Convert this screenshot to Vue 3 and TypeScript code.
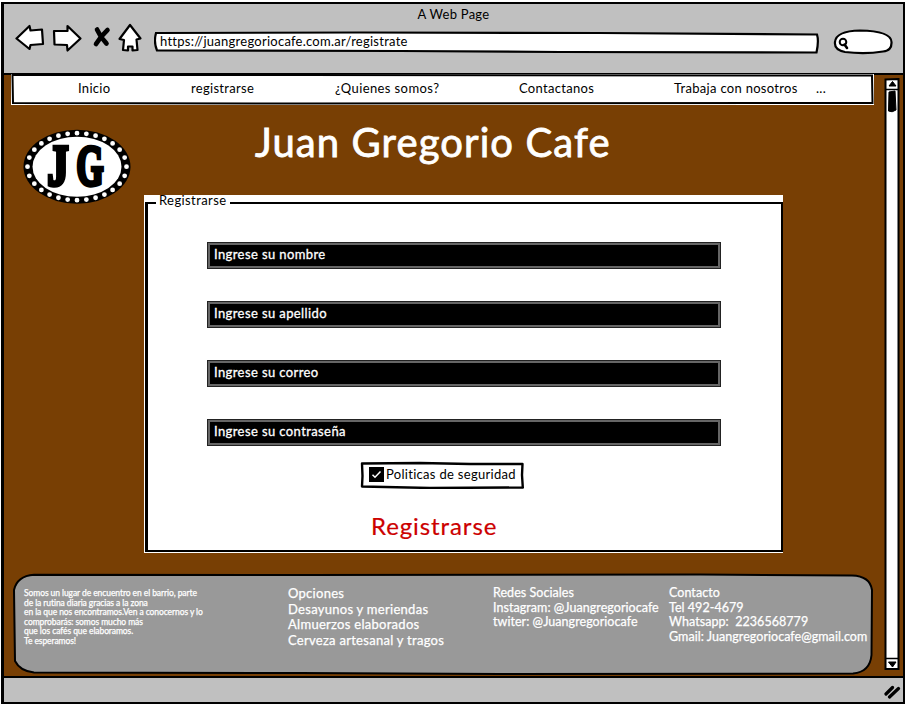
<script setup lang="ts">
interface MenuItem { label: string; cls: string }

const menu: MenuItem[] = [
  { label: 'Inicio', cls: 'm1' },
  { label: 'registrarse', cls: 'm2' },
  { label: '¿Quienes somos?', cls: 'm3' },
  { label: 'Contactanos', cls: 'm4' },
  { label: 'Trabaja con nosotros', cls: 'm5' },
  { label: '...', cls: 'm6' },
]

const fields: string[] = [
  'Ingrese su nombre',
  'Ingrese su apellido',
  'Ingrese su correo',
  'Ingrese su contraseña',
]

const about: string[] = [
  'Somos un lugar de encuentro en el barrio, parte',
  'de la rutina diaria gracias a la zona',
  'en la que nos encontramos.Ven a conocernos y lo',
  'comprobarás: somos mucho más',
  'que los cafés que elaboramos.',
  'Te esperamos!',
]
const options: string[] = ['Opciones', 'Desayunos y meriendas', 'Almuerzos elaborados', 'Cerveza artesanal y tragos']
const social: string[] = ['Redes Sociales', 'Instagram: @Juangregoriocafe', 'twiter: @Juangregoriocafe']
const contact: string[] = ['Contacto', 'Tel 492-4679', 'Whatsapp:  2236568779', 'Gmail: Juangregoriocafe@gmail.com']
</script>

<template>
  <div class="browser">
    <header class="chrome">
      <div class="window-title">A Web Page</div>
      <div class="toolbar">
        <svg class="tools" width="128" height="30" viewBox="15 23 128 30">
          <g fill="#fff" stroke="#000" stroke-width="2.200" stroke-linejoin="round">
            <path d="M16.500 38.500 L29.500 26 L30.500 30.500 L42 29.500 L43 44 L30.500 45 L29.500 49 Z" />
            <path d="M54 31 L67.500 31 L67.500 26 L80.500 38.500 L67.500 50.500 L67 45 L54.500 44.500 Z" />
            <path d="M130 25 L140.500 38.500 L136.500 39.500 L137.500 50 L132.500 50.500 L132.500 46.500 L128 46.500 L128 50.500 L123 50 L124 40 L119.500 39 Z" />
          </g>
          <path d="M97 29.500 Q100.500 37.500 106.500 43.500 M107.500 30 Q101 36 96 44" fill="none" stroke="#000" stroke-width="4.600" stroke-linecap="round" />
        </svg>
        <div class="stack url">
          <svg class="frame" width="666" height="23" viewBox="154 31 666 23">
            <path d="M156 33 L360 32.500 L600 33 L817 34.500 Q819 41 816.500 52.500 L560 52 L400 51 L157 50.500 Q153.500 42 156 33 Z" fill="#fff" stroke="#000" stroke-width="2.200" />
          </svg>
          <span class="address">https://juangregoriocafe.com.ar/registrate</span>
        </div>
        <svg class="search" width="62" height="26" viewBox="832 29 62 26">
          <path d="M835 42 Q836 31 860 30.500 Q891 31 891.500 42 Q892 51 883 51.500 Q865 54.500 845 52 Q834 50 835 42 Z" fill="#fff" stroke="#000" stroke-width="2.200" />
          <circle cx="843" cy="42" r="3.300" fill="#fff" stroke="#000" stroke-width="2" />
          <path d="M844.500 44.500 L847 48" stroke="#000" stroke-width="2.600" stroke-linecap="round" />
        </svg>
      </div>
    </header>

    <div class="viewport">
      <main class="page">
        <nav class="menu stack">
          <svg class="frame" width="863" height="32" viewBox="11 74 863 32">
            <path d="M11 74 H874 V105 H11 Z" fill="#fff" />
            <path d="M12.500 75 L300 75 L872 75.500 L872.500 103 L300 103.500 L13 103 Z" fill="#fff" stroke="#000" stroke-width="2" />
          </svg>
          <div class="links">
            <a v-for="item in menu" :key="item.label" :class="item.cls">{{ item.label }}</a>
          </div>
        </nav>

        <div class="brand">
          <svg class="logo" width="108" height="76" viewBox="23.500 129 108 76">
            <ellipse cx="77.500" cy="166.700" rx="53.500" ry="37" fill="#000" />
            <ellipse cx="77.500" cy="166.700" rx="44.500" ry="30" fill="#fff" />
            <ellipse cx="77.500" cy="166.700" rx="49.500" ry="33.500" fill="none" stroke="#fff" stroke-width="4.800" stroke-linecap="round" pathLength="28" stroke-dasharray="0 1" />
            <g font-family="'Liberation Serif', serif" font-weight="700" font-size="56" stroke="#000" stroke-width="4.600">
              <text x="48" y="185" textLength="21" lengthAdjust="spacingAndGlyphs">J</text>
              <text x="77" y="185" textLength="27" lengthAdjust="spacingAndGlyphs">G</text>
            </g>
          </svg>
          <h1>Juan Gregorio Cafe</h1>
        </div>

        <form class="register" @submit.prevent>
          <fieldset>
            <legend>Registrarse</legend>
            <div class="fields">
              <div v-for="field in fields" :key="field" class="field"><span>{{ field }}</span></div>
            </div>
            <div class="stack policy">
              <svg class="frame" width="164" height="28" viewBox="360 461 164 28">
                <path d="M362 463.500 L420 463 L470 464 L522.500 464 L522 475 L522.800 487.500 L430 488 L362 486.500 L362.500 476 Z" fill="#fff" stroke="#000" stroke-width="2.400" stroke-linejoin="round" />
              </svg>
              <label>
                <svg width="15" height="15" viewBox="0 0 15 15">
                  <rect width="15" height="15" fill="#000" />
                  <path d="M3.500 7.800 L6 10.300 L11.500 4.500" fill="none" stroke="#fff" stroke-width="1.500" />
                </svg>
                <span>Politicas de seguridad</span>
              </label>
            </div>
            <div class="submit">Registrarse</div>
          </fieldset>
        </form>

        <footer class="stack">
          <svg class="frame" width="862" height="102" viewBox="12 573 862 102">
            <path d="M34 574.700 L300 575 L700 574.500 L852 575.500 Q870 576 872 590 L871.500 655 Q870 672 853 673.500 L500 674 L300 673 L34 672.500 Q20 671 15 661 L14 590 Q17 576 34 574.700 Z" fill="#999" stroke="#000" stroke-width="2" />
          </svg>
          <div class="columns">
            <div class="about"><p v-for="line in about" :key="line">{{ line }}</p></div>
            <div class="options"><p v-for="line in options" :key="line">{{ line }}</p></div>
            <div class="social"><p v-for="line in social" :key="line">{{ line }}</p></div>
            <div class="contact"><p v-for="line in contact" :key="line">{{ line }}</p></div>
          </div>
        </footer>
      </main>

      <svg class="scrollbar" width="16" height="593" viewBox="884 78 16 593">
        <path d="M885.500 79.500 L898.500 79 L898.500 669 L885.500 669 Z" fill="#fff" stroke="#000" stroke-width="2" />
        <path d="M885 89.500 H899 M885 658.500 H899" stroke="#000" stroke-width="1.500" />
        <path d="M889 86 L892.500 81.500 L896 86 Z M888.500 662 L896 662 L892.500 667 Z" fill="#000" stroke="#000" />
        <path d="M889 92 L895 91 L896 110 Q892 113 888.500 111 Z" fill="#000" stroke="#000" />
      </svg>
    </div>

    <div class="statusbar">
      <svg width="18" height="14" viewBox="884 685 18 14">
        <path d="M886 694 L892.500 687.500 M889.500 697 L898.500 688.500" stroke="#000" stroke-width="3.200" stroke-linecap="round" />
      </svg>
    </div>
  </div>
</template>

<style>
body { background: #fff; }
</style>

<style scoped>
* { box-sizing: border-box; }
.browser {
  display: flex; flex-direction: column;
  width: 904px; height: 702px; margin: 2px 0 4px 1px;
  border: 2px solid #000; border-left-width: 3px;
  font-family: Lato, "Liberation Sans", sans-serif; font-size: 13px; line-height: 16px; color: #000;
  overflow: hidden; white-space: pre;
}
.stack { display: grid; }
.stack > * { grid-area: 1 / 1; }
.frame { display: block; }
p { margin: 0; }

.chrome { height: 71px; flex: none; background: #c0c0c0; border-bottom: 2px solid #000; padding-top: 2px; }
.window-title { text-align: center; letter-spacing: .25px; }
.toolbar { display: flex; padding: 1px 0 0 11px; align-items: flex-start; }
.tools { display: block; }
.url { margin: 8px 0 0 11px; }
.address { padding: 2px 0 0 6px; letter-spacing: .25px; }
.search { display: block; margin: 6px 0 0 12px; }

.viewport { flex: 1; display: flex; background: #783f04; min-height: 0; }
.page { width: 880px; display: flex; flex-direction: column; }
.menu { margin: -1px 0 0 7px; }
.menu .frame { position: relative; }
.links { position: relative; display: grid; grid-template-columns: 113px 144px 184px 155px 142px auto; padding: 6px 0 0 67px; letter-spacing: .3px; }
.m3 { letter-spacing: .4px; }

.brand { display: flex; height: 89px; }
.logo { display: block; margin: 23px 0 0 19px; }
h1 { margin: 12px 0 0 124px; font-size: 40px; line-height: 48px; font-weight: 400; color: #fff; -webkit-text-stroke: .8px #fff; letter-spacing: 1.1px; }

.register { width: 639px; height: 358px; margin-left: 140px; background: #fff; flex: none; }
fieldset { margin: 0 0 0 1px; padding: 0 0 0 59px; height: 357px; width: 638px; border: 2px solid #000; border-left-width: 3px; }
legend { height: 16px; line-height: 11px; margin-left: -51px; padding: 0 4px 0 3px; letter-spacing: .4px; }
.fields { display: flex; flex-direction: column; gap: 32px; padding-top: 31px; }
.field { width: 514px; height: 27px; border: 1px solid #222; background: #666; padding: 2px; }
.field span { display: block; background: #000; color: #fff; height: 21px; line-height: 18px; padding-left: 4px; letter-spacing: .4px; -webkit-text-stroke: .3px #fff; }
.policy { margin: 15px 0 0 153px; }
.policy label { display: flex; padding: 6px 0 0 9px; letter-spacing: .3px; gap: 2px; }
.policy label span { line-height: 15px; }
.submit { margin: 23px 0 0 164px; color: #c00; font-size: 24px; line-height: 28px; letter-spacing: .9px; -webkit-text-stroke: .2px #c00; }

footer { margin: 20px 0 0 8px; }
.columns { display: grid; grid-template-columns: 264px 205px 176px auto; padding-left: 12px; color: #fff; -webkit-text-stroke: .25px #fff; }
.about { padding-top: 16px; font-size: 8.500px; line-height: 9.600px; letter-spacing: -.08px; }
.options { padding-top: 13px; line-height: 15.600px; letter-spacing: .28px; }
.social, .contact { padding-top: 13px; line-height: 14.600px; font-size: 12.500px; letter-spacing: .05px; }

.scrollbar { display: block; margin-top: 3px; }
.statusbar { height: 26px; flex: none; background: #c0c0c0; border-top: 2px solid #000; display: flex; justify-content: flex-end; padding: 7px 1px 0 0; }
</style>
